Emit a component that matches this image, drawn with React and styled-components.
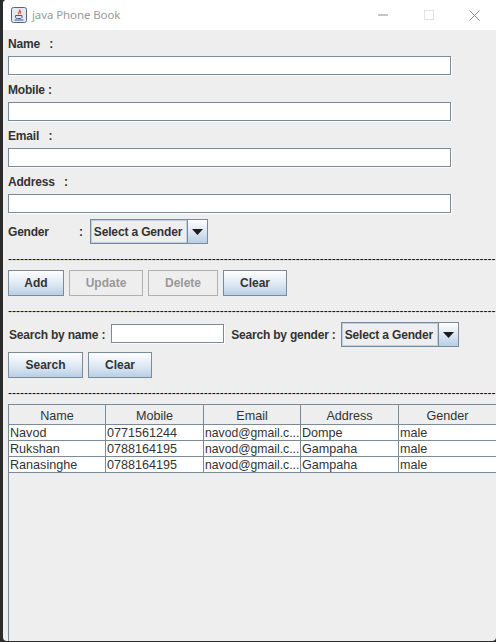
import React from "react";
import styled, { createGlobalStyle } from "styled-components";

const fieldNames = ["Name   :", "Mobile :", "Email   :", "Address   :"];
const columns = ["Name", "Mobile", "Email", "Address", "Gender"];
const rows = [
    ["Navod", "0771561244", "navod@gmail.c...", "Dompe", "male"],
    ["Rukshan", "0788164195", "navod@gmail.c...", "Gampaha", "male"],
    ["Ranasinghe", "0788164195", "navod@gmail.c...", "Gampaha", "male"],
];
const dashes = "-".repeat(122);

const JavaIcon = () => (
    <svg width="16" height="16" viewBox="0 0 16 16">
        <rect x="0.5" y="0.5" width="15" height="15" rx="2" fill="#e4e9ef" stroke="#56677c" />
        <path d="M8.5 2.5C10 4.5 6.5 5 7.5 7.5M10 4C9 5 9 6 9.5 7" fill="none" stroke="#d8622a" strokeWidth="1.2" />
        <path d="M4.5 8.5h6.5v1.5c0 1-1 1.5-2 1.5H6.5c-1 0-2-.5-2-1.5z" fill="none" stroke="#3d5f86" />
        <path d="M3.5 13h9" stroke="#3d5f86" />
    </svg>
);

const Combo = () => (
    <ComboBox>
        <ComboText>Select a Gender</ComboText>
        <ComboArrow>
            <svg width="11" height="6" viewBox="0 0 11 6">
                <path d="M0 0h11L5.5 6z" fill="#1c1c1c" />
            </svg>
        </ComboArrow>
    </ComboBox>
);

const App = () => (
    <>
        <GlobalStyle />
        <Win>
            <TitleBar>
                <JavaIcon />
                <TitleText>java Phone Book</TitleText>
                <WinButtons>
                    <svg width="10" height="2" viewBox="0 0 10 2">
                        <path d="M0 1h10" stroke="#8a8a8a" />
                    </svg>
                    <svg width="10" height="10" viewBox="0 0 10 10">
                        <rect x="0.5" y="0.5" width="9" height="9" fill="none" stroke="#e2e2e2" />
                    </svg>
                    <svg width="11" height="11" viewBox="0 0 11 11">
                        <path d="M0.5 0.5l10 10M10.5 0.5l-10 10" stroke="#8a8a8a" />
                    </svg>
                </WinButtons>
            </TitleBar>
            <Content>
                {fieldNames.map((name) => (
                    <Field key={name}>
                        <Label>{name}</Label>
                        <TextInput />
                    </Field>
                ))}
                <GenderRow>
                    <GenderLabel>Gender</GenderLabel>
                    <Label>:</Label>
                    <Combo />
                </GenderRow>
                <Dashes>{dashes}</Dashes>
                <ButtonRow>
                    <Button $w={56}>Add</Button>
                    <Button $w={74} $off>Update</Button>
                    <Button $w={70} $off>Delete</Button>
                    <Button $w={64}>Clear</Button>
                </ButtonRow>
                <Dashes>{dashes}</Dashes>
                <SearchRow>
                    <Label>Search by name :</Label>
                    <SearchInput />
                    <SearchGenderLabel>Search by gender :</SearchGenderLabel>
                    <Combo />
                </SearchRow>
                <SearchButtons>
                    <Button $w={75}>Search</Button>
                    <Button $w={64}>Clear</Button>
                </SearchButtons>
                <Dashes>{dashes}</Dashes>
                <TableBox>
                    <Table>
                        <colgroup>
                            {[97, 98, 97, 98, 98].map((w, i) => (
                                <col key={i} style={{ width: w }} />
                            ))}
                        </colgroup>
                        <thead>
                            <tr>
                                {columns.map((c) => (
                                    <Head key={c}>{c}</Head>
                                ))}
                            </tr>
                        </thead>
                        <tbody>
                            {rows.map((row) => (
                                <tr key={row[0]}>
                                    {row.map((cell, i) => (
                                        <Cell key={i} $tight={i === 2}>{cell}</Cell>
                                    ))}
                                </tr>
                            ))}
                        </tbody>
                    </Table>
                </TableBox>
            </Content>
        </Win>
    </>
);

const GlobalStyle = createGlobalStyle`
    html, body {
        margin: 0;
        width: 496px;
        height: 642px;
        overflow: hidden;
        background: #2b2b2b;
    }
`;

const Win = styled.div`
    margin-left: 3px;
    width: 493px;
    height: 641px;
    display: flex;
    flex-direction: column;
    background: #eeeeee;
    border-radius: 4px 0 4px 4px;
    overflow: hidden;
    font-family: "Liberation Sans", Arial, sans-serif;
    color: #333333;
`;

const TitleBar = styled.div`
    flex: 0 0 30px;
    display: flex;
    align-items: center;
    padding-left: 8px;
    background: #ffffff;
`;

const TitleText = styled.span`
    margin: 0 0 2px 5px;
    font-family: "Noto Sans", "Open Sans", sans-serif;
    font-size: 11.5px;
    letter-spacing: -0.1px;
    color: #9a9a9a;
`;

const WinButtons = styled.div`
    margin-left: auto;
    width: 118px;
    padding-right: 16px;
    box-sizing: border-box;
    display: flex;
    align-items: center;
    justify-content: space-between;
`;

const Content = styled.div`
    flex: 1;
    min-height: 0;
    display: flex;
    flex-direction: column;
    padding-left: 5px;
`;

const Field = styled.div`
    height: 46px;
    display: flex;
    flex-direction: column;
    padding-top: 7px;
    box-sizing: border-box;
    gap: 5px;
`;

const Label = styled.span`
    font-size: 12px;
    line-height: 14px;
    font-weight: bold;
    letter-spacing: -0.2px;
    white-space: pre;
`;

const TextInput = styled.div`
    width: 443px;
    height: 19px;
    box-sizing: border-box;
    background: #ffffff;
    border: 1px solid #7a8a99;
    box-shadow: 1px 1px 0 #ffffff;
`;

const GenderRow = styled.div`
    height: 25px;
    margin-top: 5px;
    display: flex;
    align-items: center;
`;

const GenderLabel = styled(Label)`
    width: 71px;
`;

const ComboBox = styled.div`
    width: 118px;
    height: 25px;
    box-sizing: border-box;
    display: flex;
    background: #eeeeee;
    border: 1px solid #7a8a99;
    ${GenderRow} > & {
        margin-left: 7px;
    }
`;

const ComboText = styled.div`
    flex: 1;
    display: flex;
    align-items: center;
    padding-left: 3px;
    font-size: 12px;
    font-weight: bold;
    letter-spacing: -0.15px;
    white-space: nowrap;
    box-shadow: inset 0 0 0 1px #b8cfe5;
    border-right: 1px solid #7a8a99;
`;

const ComboArrow = styled.div`
    flex: 0 0 19px;
    display: flex;
    align-items: center;
    justify-content: center;
    background: linear-gradient(#ffffff, #d6e2ef 60%, #b8cfe5);
`;

const Dashes = styled.div`
    height: 14px;
    margin-top: 8px;
    font-size: 12px;
    line-height: 14px;
    white-space: nowrap;
    overflow: hidden;
    color: #111111;
`;

const ButtonRow = styled.div`
    margin-top: 4px;
    display: flex;
    gap: 5px;
`;

const Button = styled.div`
    width: ${(p) => p.$w}px;
    height: 26px;
    box-sizing: border-box;
    display: flex;
    align-items: center;
    justify-content: center;
    font-size: 12px;
    font-weight: bold;
    border: 1px solid ${(p) => (p.$off ? "#b0b0b0" : "#7a8a99")};
    color: ${(p) => (p.$off ? "#999999" : "#333333")};
    background: ${(p) => (p.$off ? "#eeeeee" : "linear-gradient(#ffffff, #dde8f3 55%, #b8cfe5)")};
`;

const SearchRow = styled.div`
    height: 25px;
    margin-top: 4px;
    padding-left: 1px;
    display: flex;
    align-items: center;
`;

const SearchInput = styled(TextInput)`
    width: 113px;
    margin: 0 0 2px 6px;
`;

const SearchGenderLabel = styled(Label)`
    margin-left: 7px;
    margin-right: 5px;
`;

const SearchButtons = styled(ButtonRow)`
    margin-top: 5px;
`;

const TableBox = styled.div`
    flex: 1;
    margin-top: 4px;
    border-left: 1px solid #7a8a99;
`;

const Table = styled.table`
    width: 488px;
    table-layout: fixed;
    border-collapse: separate;
    border-spacing: 0;
    font-size: 12.6px;
    border-top: 1px solid #7a8a99;
`;

const Head = styled.th`
    height: 20px;
    padding: 3px 0 0;
    box-sizing: border-box;
    font-weight: normal;
    text-align: center;
    line-height: 14px;
    background: #eeeeee;
    border-right: 1px solid #7a8a99;
    border-bottom: 1px solid #7a8a99;
`;

const Cell = styled.td`
    height: 16px;
    padding: 1px 0 0 1px;
    box-sizing: border-box;
    font-size: ${(p) => (p.$tight ? "12.2px" : "inherit")};
    line-height: 14px;
    white-space: nowrap;
    overflow: hidden;
    background: #ffffff;
    border-right: 1px solid #7a8a99;
    border-bottom: 1px solid #7a8a99;
`;

export default App;
